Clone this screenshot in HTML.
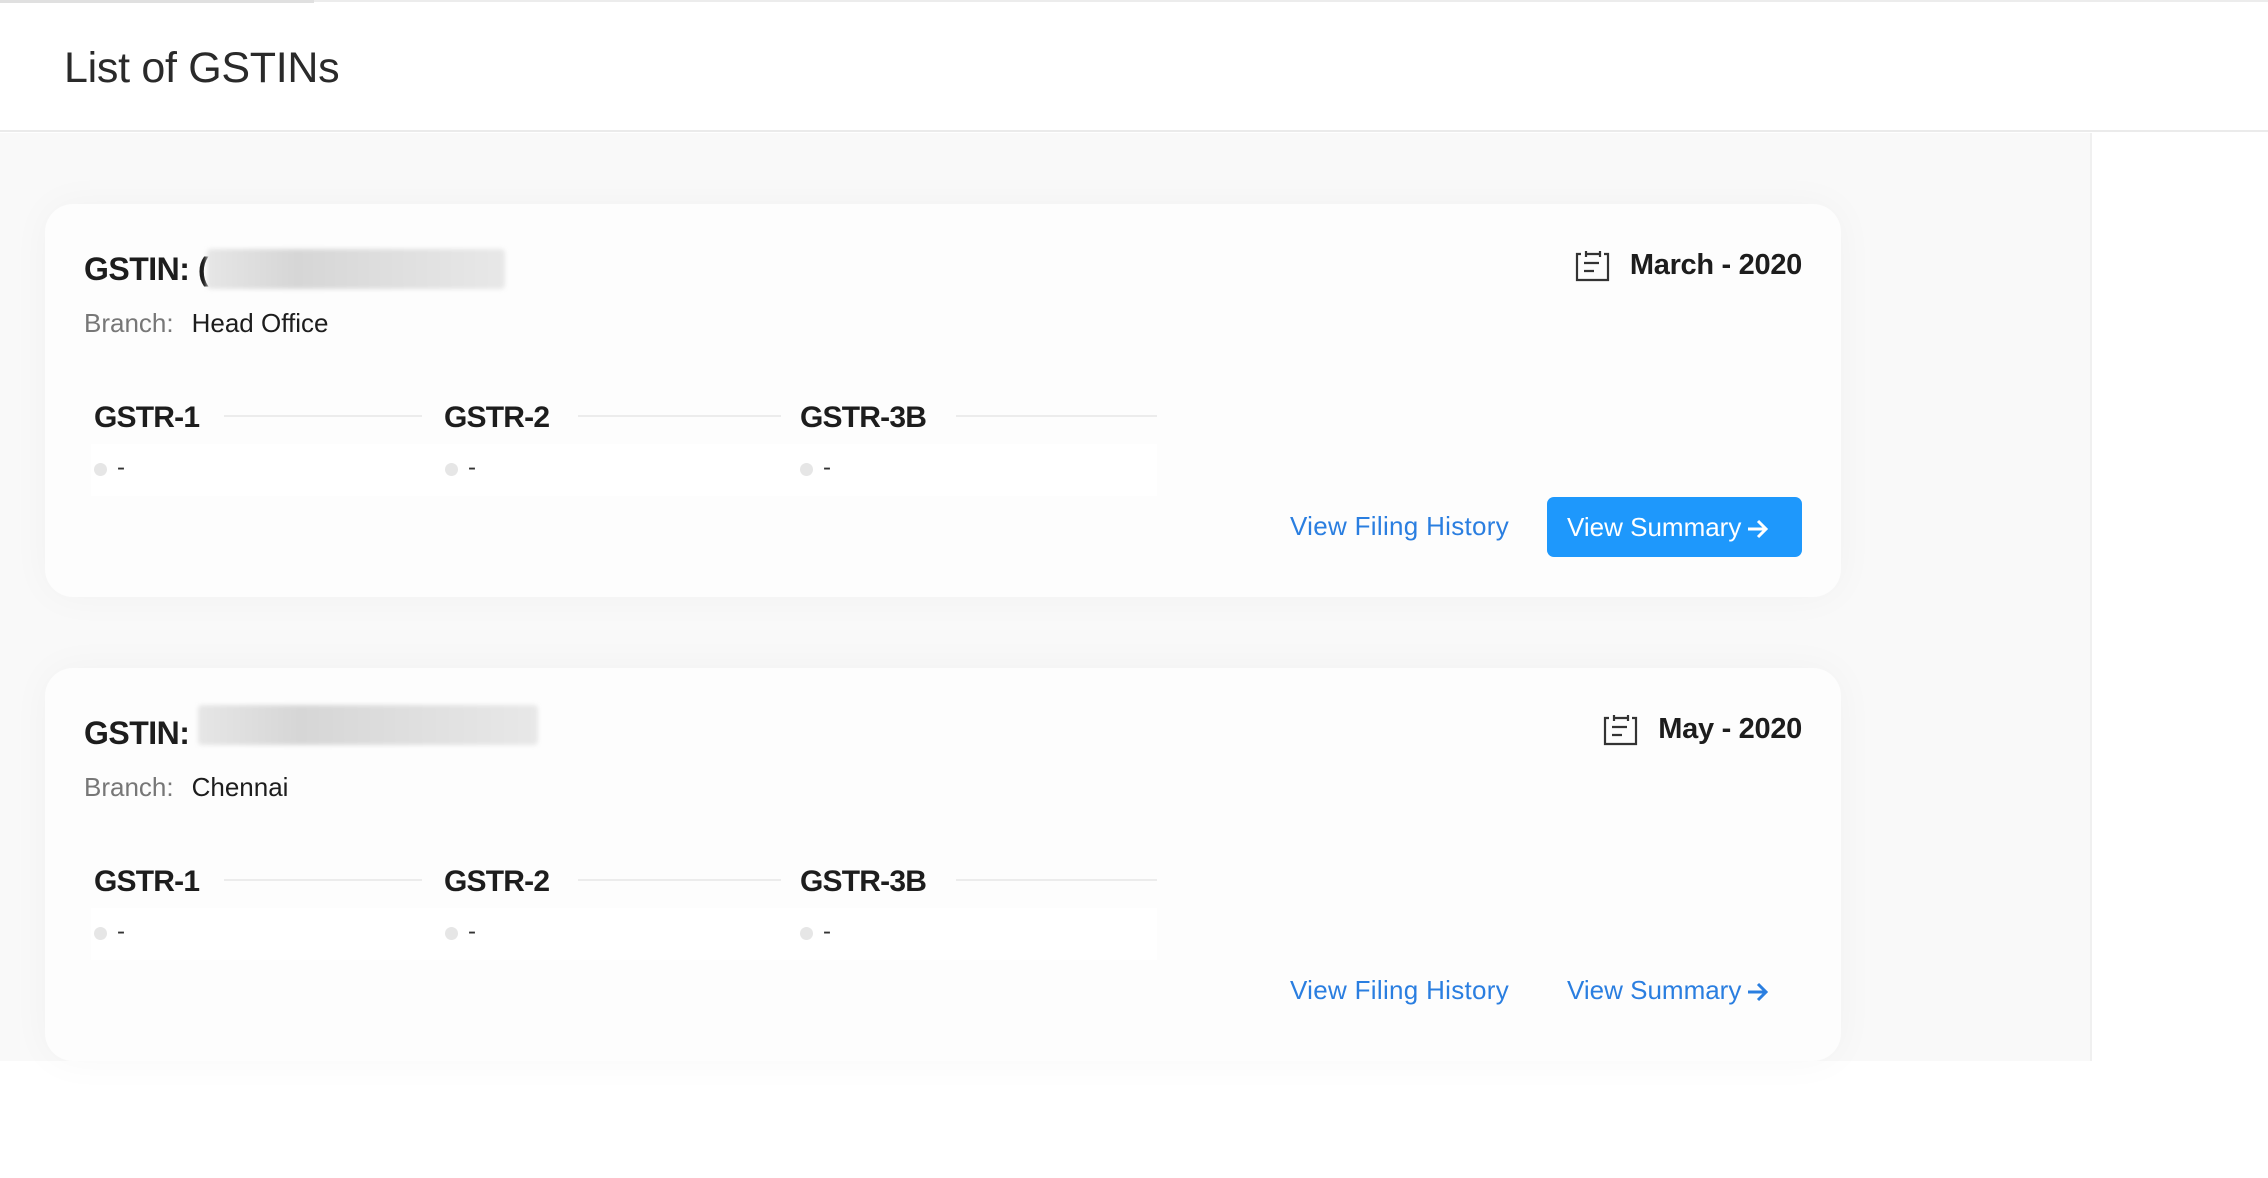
<!DOCTYPE html>
<html><head><meta charset="utf-8"><style>
*{margin:0;padding:0;box-sizing:border-box}
body{width:2268px;height:1178px;background:#fff;font-family:"Liberation Sans",sans-serif;position:relative;overflow:hidden;color:#1a1a1a}
.top{position:absolute;left:0;top:0;width:2268px;height:2px;background:#ececec}
.top2{position:absolute;left:0;top:0;width:314px;height:3px;background:#e0e0e0}
.hdr{position:absolute;left:0;top:0;width:2268px;height:132px;border-bottom:2px solid #ebebeb;background:#fff}
.title{position:absolute;left:64px;top:44px;font-size:43px;color:#2a2a2a;font-weight:300;letter-spacing:-0.3px}
.main{position:absolute;left:0;top:133px;width:2092px;height:928px;background:#f9f9f9;border-right:2px solid #f0f0f0}
.card{position:absolute;left:45px;width:1796px;height:393px;background:#fdfdfd;border-radius:28px;box-shadow:0 0 40px rgba(0,0,0,0.035)}
.g{position:absolute;left:39px;top:47px;font-size:32px;font-weight:bold;color:#1d1d1d;letter-spacing:-0.5px}
.blur{position:absolute;height:40px;background:linear-gradient(90deg,#e6e6e6,#d6d6d6 30%,#dedede 60%,#e8e8e8);border-radius:4px;filter:blur(2px)}
.br{position:absolute;left:39px;top:104px;font-size:26px;color:#777}
.br b{font-weight:normal;color:#1d1d1d;margin-left:18px}
.st{position:absolute;top:197px;font-size:30px;font-weight:bold;color:#1d1d1d;letter-spacing:-0.8px}
.ln{position:absolute;top:211px;height:2px;background:#ececec}
.bx{position:absolute;top:240px;height:52px;background:#fff}
.dot{position:absolute;top:259px;width:13px;height:13px;border-radius:50%;background:#e6e6e6}
.dash{position:absolute;top:250px;font-size:24px;color:#333}
.date{position:absolute;right:39px;top:45px;font-size:29px;font-weight:bold;color:#1d1d1d;display:flex;align-items:center;letter-spacing:-0.3px}
.date svg{margin-right:20px}
.vfh{position:absolute;left:1245px;top:307px;font-size:26px;color:#2a7ee0;letter-spacing:0.3px}
.btn{position:absolute;left:1502px;top:293px;width:255px;height:60px;background:#1e98fc;border-radius:7px;color:#fff;font-size:26px;line-height:60px;padding-left:20px}
.lnk{position:absolute;left:1522px;top:307px;font-size:26px;color:#2a7ee0}
.ar{display:inline-block;vertical-align:middle;margin-left:6px}
</style></head><body>
<div class="hdr"></div><div class="top"></div><div class="top2"></div>
<div class="title">List of GSTINs</div>
<div class="main"></div>

<div class="card" style="top:204px">
 <div class="g">GSTIN: (</div>
 <div class="blur" style="left:162px;top:45px;width:298px"></div>
 <div class="br">Branch:<b>Head Office</b></div>
 <div class="st" style="left:49px">GSTR-1</div><div class="ln" style="left:179px;width:198px"></div>
 <div class="st" style="left:399px">GSTR-2</div><div class="ln" style="left:533px;width:203px"></div>
 <div class="st" style="left:755px">GSTR-3B</div><div class="ln" style="left:911px;width:201px"></div>
 <div class="bx" style="left:46px;width:377px"></div><div class="bx" style="left:397px;width:383px"></div><div class="bx" style="left:752px;width:360px"></div>
 <div class="dot" style="left:49px"></div><div class="dash" style="left:72px">-</div>
 <div class="dot" style="left:400px"></div><div class="dash" style="left:423px">-</div>
 <div class="dot" style="left:755px"></div><div class="dash" style="left:778px">-</div>
 <div class="date"><svg width="35" height="33" viewBox="0 0 35 33" fill="none" stroke="#333" stroke-width="2.2"><path d="M6 5H2v26h31V5h-4M11 2v6M25 2v6M11 5h14M9 14h15M9 22h10"/></svg>March - 2020</div>
 <div class="vfh">View Filing History</div>
 <div class="btn">View Summary<svg class="ar" width="22" height="20" viewBox="0 0 22 20" fill="none" stroke="#fff" stroke-width="3"><path d="M1 10h18M11 2l8 8-8 8"/></svg></div>
</div>

<div class="card" style="top:668px">
 <div class="g">GSTIN:</div>
 <div class="blur" style="left:153px;top:37px;width:340px"></div>
 <div class="br">Branch:<b>Chennai</b></div>
 <div class="st" style="left:49px">GSTR-1</div><div class="ln" style="left:179px;width:198px"></div>
 <div class="st" style="left:399px">GSTR-2</div><div class="ln" style="left:533px;width:203px"></div>
 <div class="st" style="left:755px">GSTR-3B</div><div class="ln" style="left:911px;width:201px"></div>
 <div class="bx" style="left:46px;width:377px"></div><div class="bx" style="left:397px;width:383px"></div><div class="bx" style="left:752px;width:360px"></div>
 <div class="dot" style="left:49px"></div><div class="dash" style="left:72px">-</div>
 <div class="dot" style="left:400px"></div><div class="dash" style="left:423px">-</div>
 <div class="dot" style="left:755px"></div><div class="dash" style="left:778px">-</div>
 <div class="date"><svg width="35" height="33" viewBox="0 0 35 33" fill="none" stroke="#333" stroke-width="2.2"><path d="M6 5H2v26h31V5h-4M11 2v6M25 2v6M11 5h14M9 14h15M9 22h10"/></svg>May - 2020</div>
 <div class="vfh">View Filing History</div>
 <div class="lnk">View Summary<svg class="ar" width="22" height="20" viewBox="0 0 22 20" fill="none" stroke="#2a7ee0" stroke-width="3"><path d="M1 10h18M11 2l8 8-8 8"/></svg></div>
</div>
</body></html>
